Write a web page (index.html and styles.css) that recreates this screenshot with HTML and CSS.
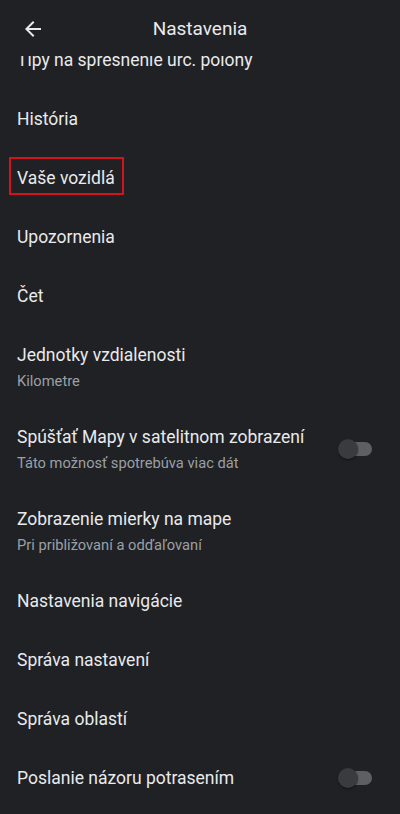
FILE: index.html
```html
<!DOCTYPE html>
<html lang="sk">
<head>
<meta charset="utf-8">
<title>Nastavenia</title>
<link rel="stylesheet" href="styles.css">
</head>
<body>
<div class="page">
  <header class="appbar">
    <button class="back" aria-label="Späť">
      <svg viewBox="0 0 24 24" width="24" height="24"><path d="M20 11H7.83l5.59-5.59L12 4l-8 8 8 8 1.41-1.41L7.83 13H20v-2z" fill="#e8eaed"/></svg>
    </button>
    <h1 class="title">Nastavenia</h1>
  </header>
  <ul class="list">
    <li class="row"><div class="text"><div class="primary">Tipy na spresnenie urč. polohy</div></div></li>
    <li class="row"><div class="text"><div class="primary">História</div></div></li>
    <li class="row"><div class="text"><div class="primary"><span class="marked">Vaše vozidlá</span></div></div></li>
    <li class="row"><div class="text"><div class="primary">Upozornenia</div></div></li>
    <li class="row"><div class="text"><div class="primary">Čet</div></div></li>
    <li class="row two"><div class="text"><div class="primary">Jednotky vzdialenosti</div><div class="secondary">Kilometre</div></div></li>
    <li class="row two"><div class="text"><div class="primary">Spúšťať Mapy v satelitnom zobrazení</div><div class="secondary">Táto možnosť spotrebúva viac dát</div></div><span class="switch"><span class="track"></span><span class="thumb"></span></span></li>
    <li class="row two"><div class="text"><div class="primary">Zobrazenie mierky na mape</div><div class="secondary">Pri približovaní a odďaľovaní</div></div></li>
    <li class="row"><div class="text"><div class="primary">Nastavenia navigácie</div></div></li>
    <li class="row"><div class="text"><div class="primary">Správa nastavení</div></div></li>
    <li class="row"><div class="text"><div class="primary">Správa oblastí</div></div></li>
    <li class="row"><div class="text"><div class="primary">Poslanie názoru potrasením</div></div><span class="switch"><span class="track"></span><span class="thumb"></span></span></li>
  </ul>
</div>
</body>
</html>
```

FILE: styles.css
```css
html, body {
  margin: 0;
  padding: 0;
  background: #202124;
}
body {
  font-family: Roboto, "Noto Sans", "Liberation Sans", sans-serif;
  color: #e8eaed;
  overflow: hidden;
}
.page {
  position: relative;
  width: 400px;
  height: 814px;
  overflow: hidden;
}
.appbar {
  position: absolute;
  top: 0;
  left: 0;
  right: 0;
  height: 56px;
  background: #202124;
  z-index: 2;
  display: flex;
  align-items: center;
  justify-content: center;
}
.back {
  position: absolute;
  left: 21px;
  top: 17px;
  width: 24px;
  height: 24px;
  padding: 0;
  border: 0;
  background: none;
  display: flex;
}
.title {
  margin: 0;
  font-size: 19px;
  font-weight: 400;
  color: #e8eaed;
  letter-spacing: 0;
  line-height: 24px;
  margin-top: 2px;
}
.list {
  list-style: none;
  margin: 30.5px 0 0;
  padding: 0;
}
.row {
  height: 59px;
  box-sizing: border-box;
  padding: 0 28px 0 17px;
  display: flex;
  align-items: center;
}
.row.two {
  height: 82px;
}
.text {
  flex: 1;
  min-width: 0;
}
.primary {
  font-size: 17.5px;
  line-height: 24px;
  color: #e8eaed;
  white-space: nowrap;
}
.secondary {
  font-size: 14.7px;
  line-height: 20px;
  margin-top: 4px;
  color: #9aa0a6;
  white-space: nowrap;
}
.marked {
  position: relative;
  display: inline-block;
}
.marked::after {
  content: "";
  position: absolute;
  top: -9px;
  bottom: -5px;
  left: -8px;
  right: -9px;
  border: 2px solid #d3141e;
}
.switch {
  position: relative;
  width: 34px;
  height: 20px;
  flex: none;
}
.track {
  position: absolute;
  left: 2px;
  right: 0;
  top: 3px;
  height: 14px;
  border-radius: 7px;
  background: #5d5f62;
}
.thumb {
  position: absolute;
  left: 0;
  top: 0;
  width: 20px;
  height: 20px;
  border-radius: 50%;
  background: #3a3b3e;
  box-shadow: 0 1px 2px rgba(0,0,0,0.45);
}
```
